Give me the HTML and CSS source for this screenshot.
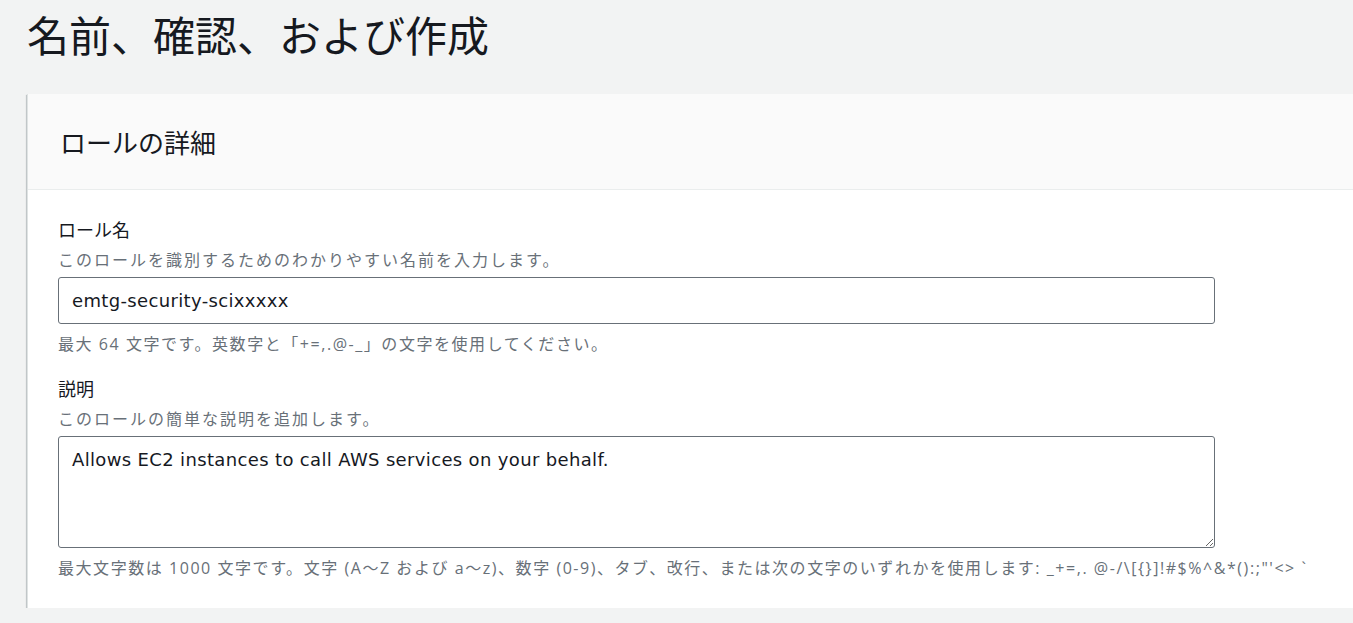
FILE: index.html
```html
<!DOCTYPE html>
<html lang="ja">

<head>
  <meta charset="UTF-8">
  <meta name="viewport" content="width=device-width, initial-scale=1.0">
  <title>名前、確認、および作成</title>
  <link rel="stylesheet" href="styles.css">
</head>

<body>
  <div class="page">
    <h1 class="page-title">名前、確認、および作成</h1>

    <div class="card">
      <div class="card-header">
        <h2>ロールの詳細</h2>
      </div>

      <div class="card-body">
        <div class="field">
          <label class="field-label" for="role-name">ロール名</label>
          <div class="field-desc">このロールを識別するためのわかりやすい名前を入力します。</div>
          <input class="field-input" id="role-name" type="text" value="emtg-security-scixxxxx">
          <div class="field-hint">最大 64 文字です。英数字と「+=,.@-_」の文字を使用してください。</div>
        </div>

        <div class="field">
          <label class="field-label" for="role-desc">説明</label>
          <div class="field-desc">このロールの簡単な説明を追加します。</div>
          <textarea class="field-input field-textarea" id="role-desc">Allows EC2 instances to call AWS services on your behalf.</textarea>
          <div class="field-hint">最大文字数は 1000 文字です。文字 (A～Z および a～z)、数字 (0-9)、タブ、改行、または次の文字のいずれかを使用します: _+=,. @-/\[{}]!#$%^&amp;*():;"'&lt;&gt; `</div>
        </div>
      </div>
    </div>
  </div>
</body>

</html>
```

FILE: styles.css
```css
/* General */
html,
body {
  overflow: hidden;
}

body {
  margin: 0;
  background-color: #f2f3f3;
  color: #16191f;
  font-family: "Open Sans", "Noto Sans CJK JP", sans-serif;
}

.page {
  padding: 4px 0 0 27px;
}

.page-title {
  margin: 0 0 30px 0;
  font-family: "Noto Sans CJK JP", sans-serif;
  font-size: 42px;
  font-weight: 400;
  line-height: 60px;
}

/* Card */
.card {
  width: 1360px;
  background: #fff;
  border-left: 1px solid #dfe3e3;
  box-shadow: 0 1px 1px 0 rgba(0, 28, 36, 0.35), -1px 1px 1px 0 rgba(0, 28, 36, 0.15);
}

.card-header {
  height: 95px;
  display: flex;
  align-items: center;
  padding: 0 32px;
  background-color: #fafafa;
  border-bottom: 1px solid #eaeded;
}

.card-header h2 {
  margin: 0;
  font-family: "Noto Sans CJK JP", sans-serif;
  font-size: 26px;
  font-weight: 400;
}

.card-body {
  padding: 26px 30px 28px 30px;
}

/* Fields */
.field {
  display: flex;
  flex-direction: column;
  margin-bottom: 19px;
}

.field:last-child {
  margin-bottom: 0;
}

.field-label {
  font-family: "Noto Sans CJK JP", sans-serif;
  font-size: 18px;
  line-height: 26px;
  padding-bottom: 5px;
}

.field-desc {
  font-family: "Noto Sans CJK JP", sans-serif;
  font-size: 16px;
  line-height: 24px;
  color: #687078;
  margin-bottom: 6px;
  letter-spacing: 2px;
}

.field-input {
  box-sizing: border-box;
  width: 1157px;
  height: 47px;
  padding: 0 13px;
  border: 1px solid #687078;
  border-radius: 3px;
  font-family: "DejaVu Sans", "Noto Sans CJK JP", sans-serif;
  font-size: 18px;
  letter-spacing: 0.35px;
  color: #16191f;
  background: #fff;
}

.field-textarea {
  height: 112px;
  padding: 10px 13px;
  resize: vertical;
  line-height: 26px;
}

.field-hint {
  margin-top: 8px;
  font-size: 16px;
  line-height: 24px;
  letter-spacing: 1.55px;
  color: #687078;
}
```
